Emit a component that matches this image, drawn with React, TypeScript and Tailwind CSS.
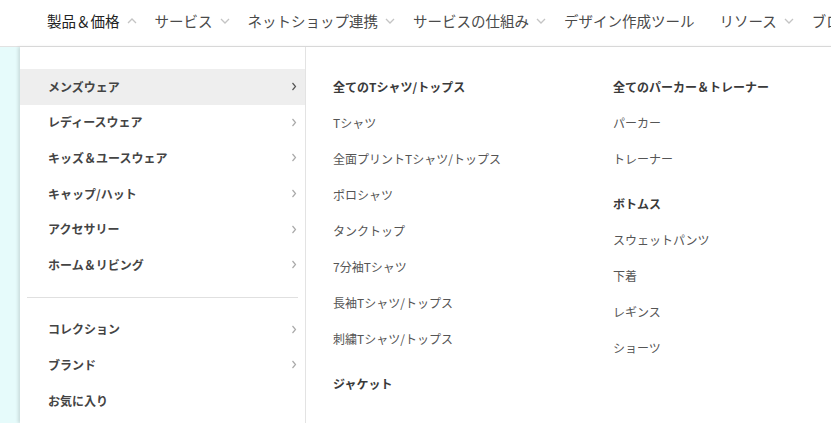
const navItems = [
  { name: "製品＆価格", open: true, chevron: true },
  { name: "サービス", chevron: true },
  { name: "ネットショップ連携", chevron: true },
  { name: "サービスの仕組み", chevron: true },
  { name: "デザイン作成ツール", chevron: false },
  { name: "リソース", chevron: true },
  { name: "ブログ", chevron: false },
];

const sideTop = [
  { name: "メンズウェア", active: true },
  { name: "レディースウェア" },
  { name: "キッズ＆ユースウェア" },
  { name: "キャップ/ハット" },
  { name: "アクセサリー" },
  { name: "ホーム＆リビング" },
];

const sideBottom = [
  { name: "コレクション", arrow: true },
  { name: "ブランド", arrow: true },
  { name: "お気に入り", arrow: false },
];

const columns = [
  [
    {
      title: "全てのTシャツ/トップス",
      items: [
        "Tシャツ",
        "全面プリントTシャツ/トップス",
        "ポロシャツ",
        "タンクトップ",
        "7分袖Tシャツ",
        "長袖Tシャツ/トップス",
        "刺繍Tシャツ/トップス",
      ],
    },
    { title: "ジャケット", items: [] },
  ],
  [
    { title: "全てのパーカー＆トレーナー", items: ["パーカー", "トレーナー"] },
    {
      title: "ボトムス",
      items: ["スウェットパンツ", "下着", "レギンス", "ショーツ"],
    },
  ],
];

const ChevronDown = ({ up }: { up?: boolean }) => (
  <svg
    width="10"
    height="6"
    viewBox="0 0 10 6"
    className={up ? "rotate-180" : ""}
    fill="none"
    stroke="#c4c4c4"
    strokeWidth="1.3"
  >
    <path d="M1 1l4 4 4-4" />
  </svg>
);

const ChevronRight = ({ dark }: { dark?: boolean }) => (
  <svg
    width="6"
    height="9"
    viewBox="0 0 6 9"
    fill="none"
    stroke={dark ? "#555" : "#aaa"}
    strokeWidth="1.2"
  >
    <path d="M1.5 1l3 3.5-3 3.5" />
  </svg>
);

export default function App() {
  return (
    <div
      className="w-[831px] h-[423px] overflow-hidden bg-white flex flex-col"
      style={{ fontFamily: '"Noto Sans CJK JP", "Noto Sans", sans-serif' }}
    >
      <nav className="h-[47px] shrink-0 border-b border-[#e2e2e2] flex items-center pl-[47px] gap-[18px] whitespace-nowrap overflow-hidden text-[14.5px] pb-[5px]">
        {navItems.map((item) => (
          <div
            key={item.name}
            className={`flex items-center gap-[7px] ${item.chevron ? "" : "mr-[7px]"}`}
          >
            <span className={item.open ? "text-[#222]" : "text-[#4a4a4a]"}>
              {item.name}
            </span>
            {item.chevron && <ChevronDown up={item.open} />}
          </div>
        ))}
      </nav>
      <div className="flex flex-1 min-h-0">
        <div className="w-[20px] shrink-0 bg-[#e6fbfb]" />
        <div className="flex flex-1 bg-white shadow-[-2px_0_3px_rgba(0,0,0,0.12)] relative">
          <aside className="w-[286px] shrink-0 border-r border-[#e3e3e3] pt-[22px]">
            {sideTop.map((item) => (
              <div
                key={item.name}
                className={`h-[35.6px] flex items-center justify-between pl-[28px] pr-[8px] text-[12px] font-bold text-[#444] ${
                  item.active ? "bg-[#eeeeee] text-[#333]" : ""
                }`}
              >
                <span>{item.name}</span>
                <ChevronRight dark={item.active} />
              </div>
            ))}
            <div className="mx-[7px] mt-[14px] mb-[14px] border-t border-[#e0e0e0]" />
            {sideBottom.map((item) => (
              <div
                key={item.name}
                className="h-[35.6px] flex items-center justify-between pl-[28px] pr-[8px] text-[12px] font-bold text-[#444]"
              >
                <span>{item.name}</span>
                {item.arrow && <ChevronRight />}
              </div>
            ))}
          </aside>
          <div className="flex pt-[22px] pl-[27px]">
            {columns.map((col, ci) => (
              <div key={ci} className="w-[280px] flex flex-col">
                {col.map((group, gi) => (
                  <div key={group.title} className={gi > 0 ? "mt-[9px]" : ""}>
                    <div className="h-[36px] flex items-center text-[12px] font-bold text-[#3a3a3a]">
                      {group.title}
                    </div>
                    {group.items.map((it) => (
                      <div
                        key={it}
                        className="h-[36px] flex items-center text-[12px] text-[#555]"
                      >
                        {it}
                      </div>
                    ))}
                  </div>
                ))}
              </div>
            ))}
          </div>
        </div>
      </div>
    </div>
  );
}
